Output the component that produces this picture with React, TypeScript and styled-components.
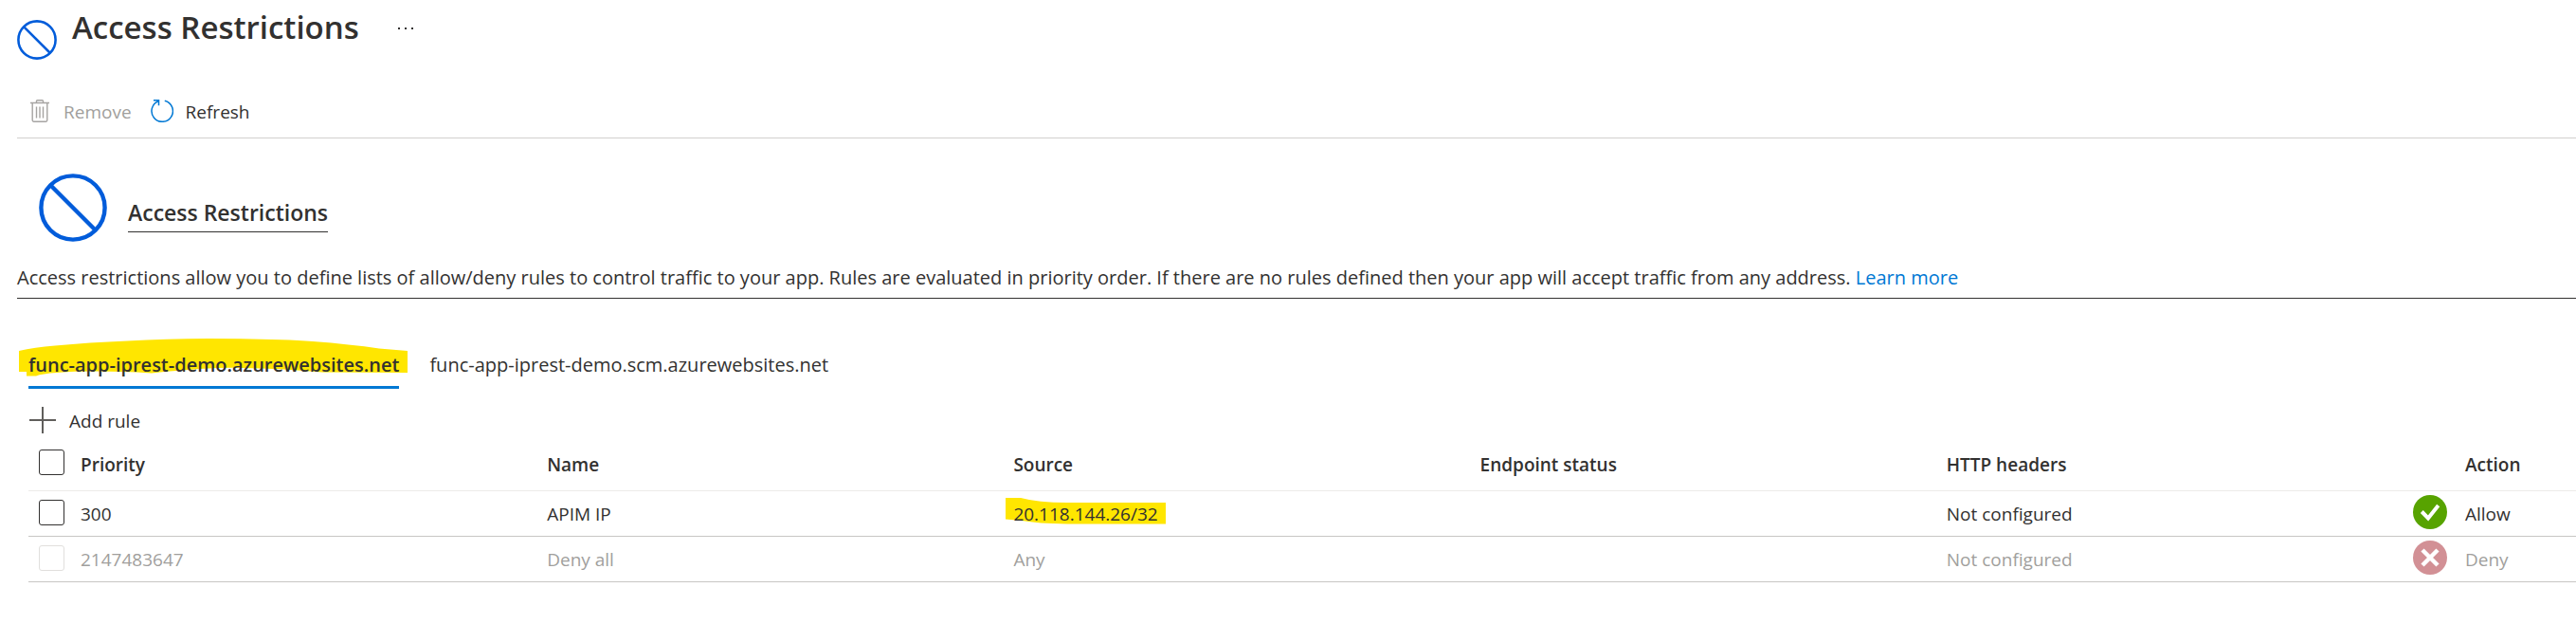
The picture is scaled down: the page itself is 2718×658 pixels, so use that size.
import React from "react";
import styled, { createGlobalStyle } from "styled-components";

const GlobalStyle = createGlobalStyle`
  * { box-sizing: border-box; }
  body {
    margin: 0;
    background: #fff;
    color: #323130;
    font-family: "Open Sans", "Noto Sans", sans-serif;
    font-size: 19px;
    line-height: 28px;
  }
`;

const Page = styled.main`
  padding: 0 0 44px 18px;
`;

const TitleBar = styled.header`
  display: flex;
  align-items: flex-start;
  gap: 16px;
  height: 92px;
  padding-top: 5px;
`;

const TitleIcon = styled.span`
  display: flex;
  padding-top: 16px;
`;

const Title = styled.h1`
  margin: 0;
  font-size: 33px;
  font-weight: 600;
  line-height: 48px;
`;

const MoreButton = styled.button`
  display: flex;
  margin: 16px 0 0 16px;
  padding: 8px;
  border: 0;
  background: none;
`;

const Toolbar = styled.div`
  display: flex;
  align-items: center;
  gap: 20px;
  height: 54px;
  padding: 0 14px 3px;
  border-bottom: 1px solid #d2d0ce;
`;

const CommandButton = styled.button<{ $gap: number }>`
  display: flex;
  align-items: center;
  gap: ${({ $gap }) => $gap}px;
  padding: 0;
  border: 0;
  background: none;
  color: #323130;
  font: inherit;

  &:disabled {
    color: #a19f9d;
  }
`;

const CommandLabel = styled.span`
  padding-top: 2px;
  line-height: 26px;
`;

const Intro = styled.section`
  padding-top: 37px;
  border-bottom: 1px solid #323130;
`;

const IntroHeading = styled.div`
  display: flex;
  align-items: flex-start;
  gap: 22px;
  padding-left: 23px;
`;

const IntroTitle = styled.h2`
  margin: 24px 0 0;
  padding-bottom: 3px;
  border-bottom: 1px solid #323130;
  font-size: 23px;
  font-weight: 600;
  line-height: 34px;
`;

const IntroText = styled.p`
  margin: 0;
  padding: 23px 0 6px;
  font-size: 20px;
  line-height: 30px;
`;

const Link = styled.a`
  color: #0078d4;
  text-decoration: none;
`;

const Rules = styled.section`
  padding-left: 12px;
`;

const Tabs = styled.div`
  display: flex;
  gap: 32px;
  padding-top: 56px;
`;

const Tab = styled.button<{ $active?: boolean }>`
  position: relative;
  z-index: 0;
  padding: 0 0 8px;
  border: 0;
  border-bottom: 3px solid ${({ $active }) => ($active ? "#0078d4" : "transparent")};
  background: none;
  color: #323130;
  font: inherit;
  font-size: 20px;
  font-weight: ${({ $active }) => ($active ? 600 : 400)};
  line-height: 28px;
`;

const TabMarker = styled.svg`
  position: absolute;
  z-index: -1;
  top: -14px;
  left: -10px;
`;

const AddRow = styled.div`
  display: flex;
  padding: 19px 0 8px 1px;
`;

const Table = styled.table`
  width: 100%;
  table-layout: fixed;
  border-collapse: collapse;
`;

const HeadCell = styled.th`
  height: 52px;
  padding: 0 0 2px;
  border-bottom: 1px solid #edebe9;
  font-weight: 600;
  text-align: left;
`;

const Row = styled.tr<{ $muted?: boolean }>`
  color: ${({ $muted }) => ($muted ? "#a19f9d" : "#323130")};
`;

const Cell = styled.td`
  height: 48px;
  padding: 2px 0 0;
  border-bottom: 1px solid #c8c6c4;
`;

const CheckCol = styled.col`
  width: 55px;
`;

const StatusCol = styled.col`
  width: 55px;
`;

const ActionCol = styled.col`
  width: 117px;
`;

const Checkbox = styled.input`
  display: block;
  appearance: none;
  width: 27px;
  height: 27px;
  margin: 0 0 4px 11px;
  border: 1px solid #323130;
  border-radius: 3px;
  background: #fff;

  &:disabled {
    border-color: #e1dfdd;
  }
`;

const Marked = styled.span`
  position: relative;
  z-index: 0;
`;

const SourceMarker = styled.svg`
  position: absolute;
  z-index: -1;
  top: -4px;
  left: -8px;
`;

const StatusIcon = styled.svg`
  display: block;
  margin-bottom: 4px;
`;

const BlockIcon = ({ size }: { size: number }) => (
  <svg width={size} height={size} viewBox="0 0 72 72" fill="none" stroke="#015cda" strokeWidth="4.4" aria-hidden="true">
    <circle cx="36" cy="36" r="33.6" />
    <path d="M12.5 12.5 60 60" />
  </svg>
);

const TrashIcon = () => (
  <svg width="20" height="24" viewBox="0 0 20 24" fill="none" stroke="#a6a4a2" strokeWidth="1.4" aria-hidden="true">
    <path d="M0 3.5h20M6.5 3.5V1.6q0-.9.9-.9h5.2q.9 0 .9.9v1.9M2.2 3.5v18.3q0 1.4 1.4 1.4h12.8q1.4 0 1.4-1.4V3.5M6.5 7.5v12M10 7.5v12M13.5 7.5v12" />
  </svg>
);

const RefreshIcon = () => (
  <svg width="24" height="24" viewBox="0 0 24 24" fill="none" stroke="#0078d4" strokeWidth="1.5" aria-hidden="true">
    <path d="M14.8 1.2A11.2 11.2 0 1 1 8.3 1.6M3 .8h5.5v5.4" />
  </svg>
);

const PlusIcon = () => (
  <svg width="28" height="28" viewBox="0 0 28 28" stroke="#605e5c" strokeWidth="2" aria-hidden="true">
    <path d="M14 0v28M0 14h28" />
  </svg>
);

const AllowIcon = () => (
  <StatusIcon width="36" height="36" viewBox="0 0 36 36" aria-hidden="true">
    <circle cx="18" cy="18" r="18" fill="#57a300" />
    <path d="m9.300 17.500 6.700 7L26.700 11" fill="none" stroke="#fff" strokeWidth="4" />
  </StatusIcon>
);

const DenyIcon = () => (
  <StatusIcon width="36" height="36" viewBox="0 0 36 36" aria-hidden="true">
    <circle cx="18" cy="18" r="18" fill="#d29095" />
    <path d="m10 10 16 16M26 10 10 26" stroke="#fff" strokeWidth="4.5" />
  </StatusIcon>
);

const rules = [
  { priority: "300", name: "APIM IP", source: "20.118.144.26/32", headers: "Not configured", action: "Allow", locked: false },
  { priority: "2147483647", name: "Deny all", source: "Any", headers: "Not configured", action: "Deny", locked: true },
];

export default function App() {
  return (
    <>
      <GlobalStyle />
      <Page>
        <TitleBar>
          <TitleIcon><BlockIcon size={42} /></TitleIcon>
          <Title>Access Restrictions</Title>
          <MoreButton aria-label="More options">
            <svg width="18" height="2" viewBox="0 0 18 2" fill="#323130" aria-hidden="true">
              <path d="M1 0h2v2H1zM8 0h2v2H8zM15 0h2v2h-2z" />
            </svg>
          </MoreButton>
        </TitleBar>
        <Toolbar>
          <CommandButton $gap={15} disabled><TrashIcon /><CommandLabel>Remove</CommandLabel></CommandButton>
          <CommandButton $gap={13}><RefreshIcon /><CommandLabel>Refresh</CommandLabel></CommandButton>
        </Toolbar>
        <Intro>
          <IntroHeading>
            <BlockIcon size={72} />
            <IntroTitle>Access Restrictions</IntroTitle>
          </IntroHeading>
          <IntroText>
            Access restrictions allow you to define lists of allow/deny rules to control traffic to your app. Rules are
            evaluated in priority order. If there are no rules defined then your app will accept traffic from any
            address. <Link href="#learn-more">Learn more</Link>
          </IntroText>
        </Intro>
        <Rules>
          <Tabs role="tablist">
            <Tab role="tab" aria-selected="true" $active>
              <TabMarker width="410" height="40" viewBox="0 0 410 40" fill="#ffe600" aria-hidden="true">
                <path d="M0 13Q16 9 38 7.500Q110 1 200 0Q270 0 310 3Q350 6 380 10.500L410 13V36L320 35.500Q260 30 210 31Q170 33 140 36.500Q80 33 40 36Q24 37 18 39.500H8V35H0Z" />
              </TabMarker>
              func-app-iprest-demo.azurewebsites.net
            </Tab>
            <Tab role="tab" aria-selected="false">func-app-iprest-demo.scm.azurewebsites.net</Tab>
          </Tabs>
          <AddRow>
            <CommandButton $gap={14}><PlusIcon /><CommandLabel>Add rule</CommandLabel></CommandButton>
          </AddRow>
          <Table>
            <colgroup>
              <CheckCol />
              <col /><col /><col /><col /><col />
              <StatusCol />
              <ActionCol />
            </colgroup>
            <thead>
              <tr>
                <HeadCell><Checkbox type="checkbox" aria-label="Select all rules" /></HeadCell>
                <HeadCell>Priority</HeadCell>
                <HeadCell>Name</HeadCell>
                <HeadCell>Source</HeadCell>
                <HeadCell>Endpoint status</HeadCell>
                <HeadCell>HTTP headers</HeadCell>
                <HeadCell />
                <HeadCell>Action</HeadCell>
              </tr>
            </thead>
            <tbody>
              {rules.map((rule) => (
                <Row key={rule.priority} $muted={rule.locked}>
                  <Cell><Checkbox type="checkbox" aria-label={`Select rule ${rule.name}`} disabled={rule.locked} /></Cell>
                  <Cell>{rule.priority}</Cell>
                  <Cell>{rule.name}</Cell>
                  <Cell>
                    {rule.locked ? rule.source : (
                      <Marked>
                        <SourceMarker width="169" height="28" viewBox="0 0 169 28" fill="#ffe600" aria-hidden="true">
                          <path d="M0 0H16Q34 5 65 5H169V27.500H65Q34 27 17 24L0 22.500Z" />
                        </SourceMarker>
                        {rule.source}
                      </Marked>
                    )}
                  </Cell>
                  <Cell />
                  <Cell>{rule.headers}</Cell>
                  <Cell>{rule.locked ? <DenyIcon /> : <AllowIcon />}</Cell>
                  <Cell>{rule.action}</Cell>
                </Row>
              ))}
            </tbody>
          </Table>
        </Rules>
      </Page>
    </>
  );
}
